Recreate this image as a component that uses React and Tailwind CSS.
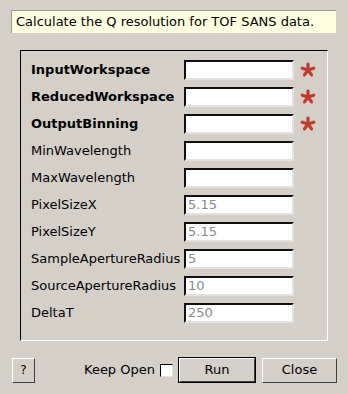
const fields = [
  { name: "InputWorkspace", required: true, value: "" },
  { name: "ReducedWorkspace", required: true, value: "" },
  { name: "OutputBinning", required: true, value: "" },
  { name: "MinWavelength", value: "" },
  { name: "MaxWavelength", value: "" },
  { name: "PixelSizeX", value: "5.15" },
  { name: "PixelSizeY", value: "5.15" },
  { name: "SampleApertureRadius", value: "5" },
  { name: "SourceApertureRadius", value: "10" },
  { name: "DeltaT", value: "250" },
];

const Asterisk = () => (
  <svg width="16" height="16" viewBox="-8 -8 16 16" className="shrink-0">
    {[-90, -18, 54, 126, 198].map((a) => {
      const r = (a * Math.PI) / 180;
      return (
        <line
          key={a}
          x1="0"
          y1="0"
          x2={(6 * Math.cos(r)).toFixed(2)}
          y2={(6 * Math.sin(r)).toFixed(2)}
          stroke="#c23a2b"
          strokeWidth="3.2"
          strokeLinecap="round"
        />
      );
    })}
  </svg>
);

const App = () => {
  return (
    <div
      className="w-[348px] h-[394px] bg-[#d4d0c8] text-[12px] text-black pt-[10px] pl-[11px] overflow-hidden"
      style={{ fontFamily: '"DejaVu Sans", sans-serif' }}
    >
      {/* Description */}
      <div className="w-[325px] h-[23px] bg-[#ffffe1] border-t border-l border-t-[#9a9890] border-l-[#9a9890] flex items-center pl-[4px] text-[13px]">
        Calculate the Q resolution for TOF SANS data.
      </div>

      {/* Properties group */}
      <div className="ml-[9px] mt-[17px] w-[308px] h-[291px] border border-t-black border-l-black border-b-white border-r-white pt-[9px] pl-[10px] flex flex-col gap-[7px]">
        {fields.map((f) => (
          <div key={f.name} className="flex items-center h-[20px]">
            <div className={`w-[153px] text-[13px] whitespace-nowrap ${f.required ? "font-bold" : ""}`}>
              {f.name}
            </div>
            <div className="w-[110px] h-[20px] bg-white border-2 border-t-[#101010] border-l-[#101010] border-b-[#e4e1dc] border-r-[#e4e1dc] flex items-center pl-[2px] text-[13px] text-[#8a8a8a]">
              {f.value}
            </div>
            {f.required && (
              <div className="ml-[6px]">
                <Asterisk />
              </div>
            )}
          </div>
        ))}
      </div>

      {/* Bottom buttons */}
      <div className="flex items-center mt-[16px] h-[26px] text-[13px]">
        <button className="ml-[1px] w-[23px] h-[25px] bg-[#d4d0c8] border border-t-white border-l-white border-b-[#404040] border-r-[#404040] text-[12px]">
          ?
        </button>
        <span className="ml-[49px]">Keep Open</span>
        <div className="ml-[5px] w-[13px] h-[13px] bg-white border border-t-black border-l-black border-b-[#e4e1dc] border-r-[#e4e1dc]" />
        <button className="ml-[5px] w-[78px] h-[26px] border border-black bg-[#d4d0c8]">
          <div className="w-full h-full border border-t-white border-l-white border-b-[#404040] border-r-[#404040] flex items-center justify-center">
            Run
          </div>
        </button>
        <button className="ml-[6px] w-[75px] h-[25px] bg-[#d4d0c8] border border-t-white border-l-white border-b-[#404040] border-r-[#404040]">
          Close
        </button>
      </div>
    </div>
  );
};

export default App;
